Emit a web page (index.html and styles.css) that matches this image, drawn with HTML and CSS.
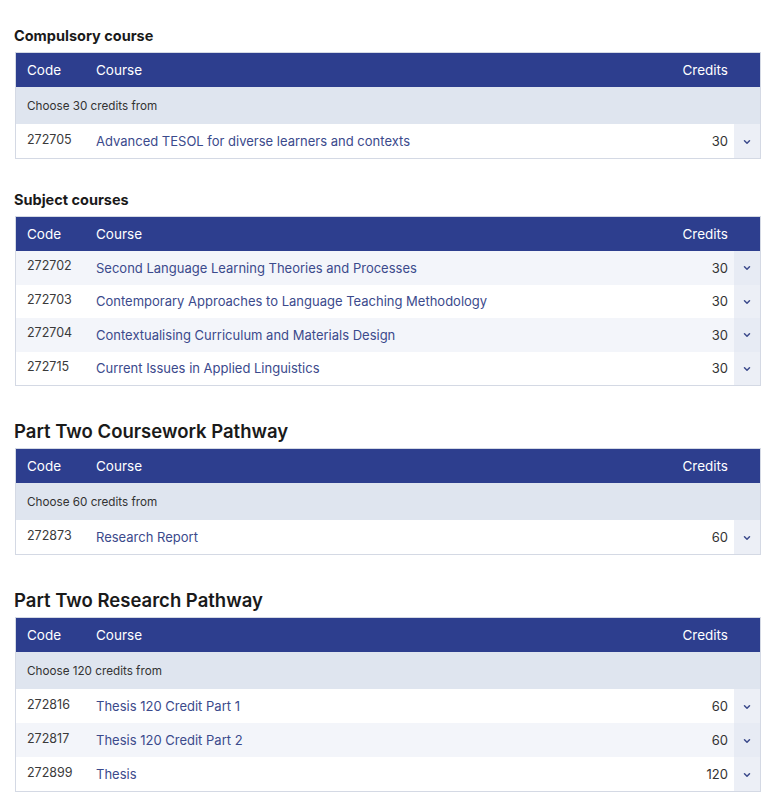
FILE: index.html
```html
<!DOCTYPE html>
<html lang="en">
<head>
<meta charset="utf-8">
<title>Courses</title>
<link rel="stylesheet" href="styles.css">
</head>
<body>
<div class="page">

  <section class="block">
    <h3 class="title title-sm">Compulsory course</h3>
    <table class="courses">
      <thead>
        <tr><th class="c-code">Code</th><th class="c-name">Course</th><th class="c-cred" colspan="2">Credits</th></tr>
      </thead>
      <tbody>
        <tr class="group"><td colspan="4">Choose 30 credits from</td></tr>
        <tr class="row"><td class="c-code">272705</td><td class="c-name"><a href="#">Advanced TESOL for diverse learners and contexts</a></td><td class="c-cred">30</td><td class="c-tog"><svg viewBox="0 0 10 10" width="10" height="10"><path d="M2.5 3.8 L5 6.2 L7.5 3.8" /></svg></td></tr>
      </tbody>
    </table>
  </section>

  <section class="block">
    <h3 class="title title-sm">Subject courses</h3>
    <table class="courses striped">
      <thead>
        <tr><th class="c-code">Code</th><th class="c-name">Course</th><th class="c-cred" colspan="2">Credits</th></tr>
      </thead>
      <tbody>
        <tr class="row"><td class="c-code">272702</td><td class="c-name"><a href="#">Second Language Learning Theories and Processes</a></td><td class="c-cred">30</td><td class="c-tog"><svg viewBox="0 0 10 10" width="10" height="10"><path d="M2.5 3.8 L5 6.2 L7.5 3.8" /></svg></td></tr>
        <tr class="row"><td class="c-code">272703</td><td class="c-name"><a href="#">Contemporary Approaches to Language Teaching Methodology</a></td><td class="c-cred">30</td><td class="c-tog"><svg viewBox="0 0 10 10" width="10" height="10"><path d="M2.5 3.8 L5 6.2 L7.5 3.8" /></svg></td></tr>
        <tr class="row"><td class="c-code">272704</td><td class="c-name"><a href="#">Contextualising Curriculum and Materials Design</a></td><td class="c-cred">30</td><td class="c-tog"><svg viewBox="0 0 10 10" width="10" height="10"><path d="M2.5 3.8 L5 6.2 L7.5 3.8" /></svg></td></tr>
        <tr class="row"><td class="c-code">272715</td><td class="c-name"><a href="#">Current Issues in Applied Linguistics</a></td><td class="c-cred">30</td><td class="c-tog"><svg viewBox="0 0 10 10" width="10" height="10"><path d="M2.5 3.8 L5 6.2 L7.5 3.8" /></svg></td></tr>
      </tbody>
    </table>
  </section>

  <section class="block">
    <h2 class="title title-lg">Part Two Coursework Pathway</h2>
    <table class="courses">
      <thead>
        <tr><th class="c-code">Code</th><th class="c-name">Course</th><th class="c-cred" colspan="2">Credits</th></tr>
      </thead>
      <tbody>
        <tr class="group"><td colspan="4">Choose 60 credits from</td></tr>
        <tr class="row"><td class="c-code">272873</td><td class="c-name"><a href="#">Research Report</a></td><td class="c-cred">60</td><td class="c-tog"><svg viewBox="0 0 10 10" width="10" height="10"><path d="M2.5 3.8 L5 6.2 L7.5 3.8" /></svg></td></tr>
      </tbody>
    </table>
  </section>

  <section class="block">
    <h2 class="title title-lg">Part Two Research Pathway</h2>
    <table class="courses">
      <thead>
        <tr><th class="c-code">Code</th><th class="c-name">Course</th><th class="c-cred" colspan="2">Credits</th></tr>
      </thead>
      <tbody>
        <tr class="group"><td colspan="4">Choose 120 credits from</td></tr>
        <tr class="row"><td class="c-code">272816</td><td class="c-name"><a href="#">Thesis 120 Credit Part 1</a></td><td class="c-cred">60</td><td class="c-tog"><svg viewBox="0 0 10 10" width="10" height="10"><path d="M2.5 3.8 L5 6.2 L7.5 3.8" /></svg></td></tr>
        <tr class="row alt"><td class="c-code">272817</td><td class="c-name"><a href="#">Thesis 120 Credit Part 2</a></td><td class="c-cred">60</td><td class="c-tog"><svg viewBox="0 0 10 10" width="10" height="10"><path d="M2.5 3.8 L5 6.2 L7.5 3.8" /></svg></td></tr>
        <tr class="row"><td class="c-code">272899</td><td class="c-name"><a href="#">Thesis</a></td><td class="c-cred">120</td><td class="c-tog"><svg viewBox="0 0 10 10" width="10" height="10"><path d="M2.5 3.8 L5 6.2 L7.5 3.8" /></svg></td></tr>
      </tbody>
    </table>
  </section>

</div>
</body>
</html>
```

FILE: styles.css
```css
html, body {
  margin: 0;
  padding: 0;
  background: #ffffff;
}

body {
  font-family: Inter, "Liberation Sans", Arial, sans-serif;
  color: #222222;
}

.page {
  padding: 26px 12px 0 15px;
}

.title {
  margin: 0;
  color: #1a1a1a;
  font-weight: 700;
  margin-left: -1px;
}

.title-sm {
  font-size: 14.5px;
  line-height: 20px;
  margin-bottom: 6px;
}

.title-lg {
  font-size: 18.5px;
  line-height: 24px;
  margin-bottom: 5px;
  font-weight: 600;
}

.block + .block .title-sm {
  margin-top: 31px;
}

.block + .block .title-lg {
  margin-top: 33px;
}

.courses {
  width: 100%;
  border-collapse: collapse;
  border: 1px solid #d4d9e4;
  font-size: 13px;
}

.courses th {
  background: #2d3e8e;
  color: #ffffff;
  font-weight: 400;
  font-size: 13.5px;
  height: 34px;
  padding: 0;
  text-align: left;
  border: 0;
}

.courses th.c-code {
  padding-left: 11px;
  width: 69px;
}

.courses th.c-cred {
  text-align: right;
  padding-right: 32px;
}

.group td {
  background: #dfe5ef;
  height: 37px;
  padding: 0 0 0 11px;
  font-size: 11.7px;
  color: #333333;
}

.row td {
  height: 34px;
  padding: 0;
  background: #ffffff;
}

.striped .row td {
  height: 33.5px;
}

.striped .row:nth-child(odd) td,
.row.alt td {
  background: #f3f5fa;
}

.row td.c-code {
  height: 30px;
  padding: 0 0 4px 11px;
  color: #3a3a3a;
  font-size: 12.5px;
}

.striped .row td.c-code {
  height: 29.5px;
}

.row td.c-name a {
  color: #3b4a8c;
  text-decoration: none;
}

.row td.c-cred {
  text-align: right;
  padding-right: 6px;
  color: #333333;
  width: 60px;
}

.row td.c-tog {
  width: 26px;
  text-align: center;
  background: #eceff6;
  padding: 0;
}

.striped .row:nth-child(odd) td.c-tog,
.row.alt td.c-tog {
  background: #e7ebf4;
}

.c-tog svg {
  display: block;
  margin: 1px auto 0;
}

.c-tog svg path {
  fill: none;
  stroke: #3b4a8c;
  stroke-width: 1.5;
  stroke-linecap: round;
  stroke-linejoin: round;
}
```
